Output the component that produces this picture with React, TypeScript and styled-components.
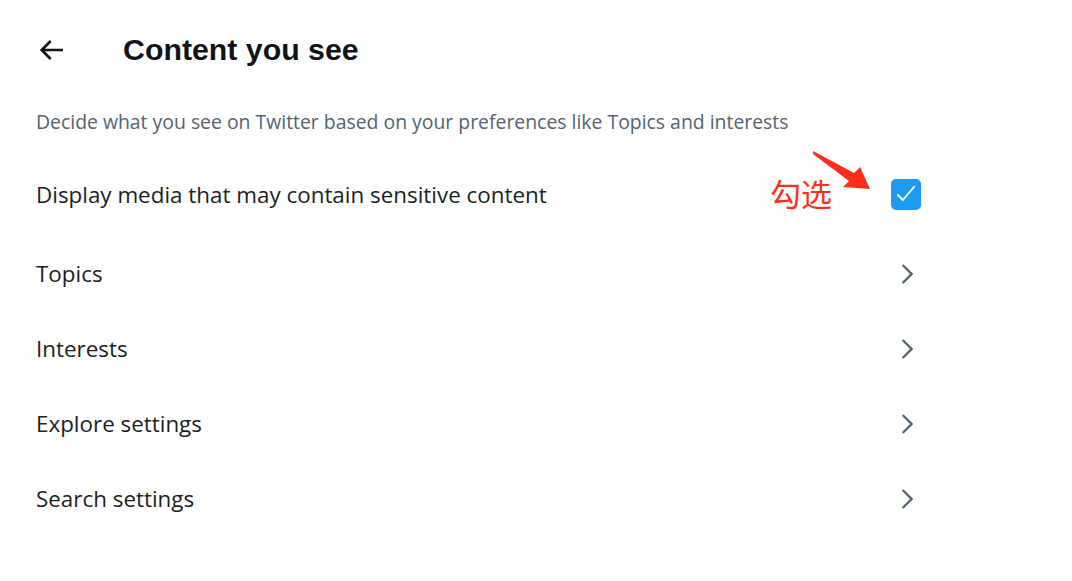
import styled, { createGlobalStyle } from "styled-components";

const GlobalStyle = createGlobalStyle`
  html, body {
    margin: 0;
    padding: 0;
    background: #ffffff;
  }
  body {
    font-family: "Open Sans", "Noto Sans", sans-serif;
    color: #0f1419;
  }
`;

const Page = styled.div`
  width: 917px;
  padding-left: 20px;
  display: flex;
  flex-direction: column;
`;

const Header = styled.div`
  height: 100px;
  display: flex;
  align-items: center;
  padding-left: 15px;
  gap: 56px;
`;

const BackButton = styled.div`
  width: 32px;
  height: 32px;
  display: flex;
  align-items: center;
  justify-content: center;
  color: #0f1419;
`;

const Title = styled.h2`
  margin: 0;
  font-family: "Liberation Sans", Arial, sans-serif;
  font-weight: 700;
  font-size: 30.3px;
  color: #0f1419;
`;

const Description = styled.div`
  padding: 10px 16px;
  line-height: 24px;
  font-size: 19.4px;
  color: #536471;
`;

const Row = styled.div<{ $tall?: boolean }>`
  position: relative;
  height: ${(p) => (p.$tall ? "84px" : "75px")};
  margin-top: ${(p) => (p.$tall ? "8px" : "0")};
  padding: 0 16px;
  display: flex;
  align-items: center;
  justify-content: space-between;
`;

const RowLabel = styled.span`
  font-size: 22.4px;
  color: #1a1f24;
`;

const Checkbox = styled.div`
  width: 30px;
  height: 31px;
  border-radius: 5px;
  background: #1d9bf0;
  display: flex;
  align-items: center;
  justify-content: center;
`;

const Chevron = styled.div`
  width: 28px;
  height: 28px;
  color: #536471;
  display: flex;
`;

const NoteText = styled.span`
  position: absolute;
  left: 750px;
  top: 25px;
  font-family: "Noto Sans CJK SC", sans-serif;
  font-size: 31px;
  line-height: 1;
  color: #ff2d1a;
`;

const NoteArrow = styled.svg`
  position: absolute;
  left: 790px;
  top: -7px;
`;

const links = ["Topics", "Interests", "Explore settings", "Search settings"];

export default function App() {
  return (
    <>
      <GlobalStyle />
      <Page>
        <Header>
          <BackButton>
            <svg viewBox="0 0 24 24" width="32" height="32" fill="currentColor">
              <path d="M7.414 13l5.043 5.04-1.414 1.42L3.586 12l7.457-7.46 1.414 1.42L7.414 11H21v2H7.414z" />
            </svg>
          </BackButton>
          <Title>Content you see</Title>
        </Header>
        <Description>
          Decide what you see on Twitter based on your preferences like Topics and interests
        </Description>
        <Row $tall>
          <RowLabel>Display media that may contain sensitive content</RowLabel>
          <Checkbox>
            <svg viewBox="0 0 24 24" width="30" height="30" fill="none" stroke="#ffffff" strokeWidth="1.5" strokeLinecap="round" strokeLinejoin="round">
              <path d="M5.5 12.8l4 4L18.5 6.2" />
            </svg>
          </Checkbox>
          <NoteText>勾选</NoteText>
          <NoteArrow width="65" height="50" viewBox="0 0 65 50">
            <polygon points="3,6 44,28 50,22 60,44 33,42 39,36 3,9" fill="#ff2d1a" />
          </NoteArrow>
        </Row>
        {links.map((label) => (
          <Row key={label}>
            <RowLabel>{label}</RowLabel>
            <Chevron>
              <svg viewBox="0 0 24 24" width="28" height="28" fill="currentColor">
                <path d="M14.586 12L7.543 4.96l1.414-1.42L17.414 12l-8.457 8.46-1.414-1.42L14.586 12z" />
              </svg>
            </Chevron>
          </Row>
        ))}
      </Page>
    </>
  );
}
